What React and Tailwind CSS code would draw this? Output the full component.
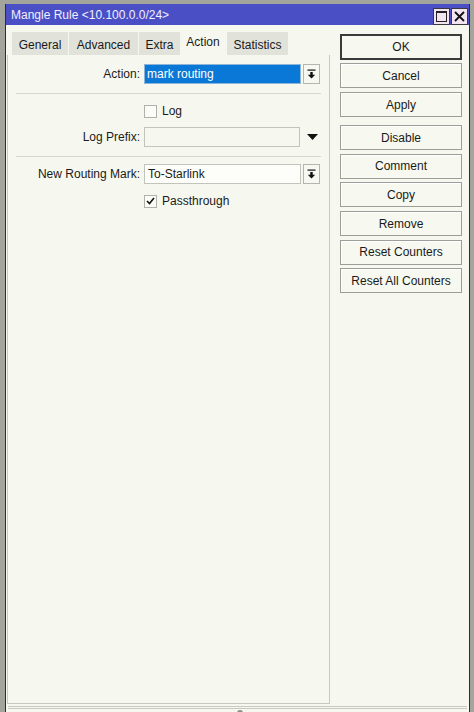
import React from "react";

function DropBtn() {
  return (
    <div className="w-[17px] h-[20px] border border-[#b4b6ae] bg-[#f7f8f2] flex items-center justify-center">
      <svg width="9" height="10" viewBox="0 0 9 10">
        <rect x="0.5" y="0.5" width="8" height="1.2" fill="#111" />
        <rect x="3.3" y="3" width="2.4" height="3" fill="#111" />
        <polygon points="0.8,5.8 8.2,5.8 4.5,9.6" fill="#111" />
      </svg>
    </div>
  );
}

function Btn({ children, primary }) {
  return (
    <div
      className={
        "flex items-center justify-center text-[12px] text-[#1a1a1a] bg-[#f7f9f0] " +
        (primary ? "h-[26px] border-2 border-[#3a3a3a]" : "h-[25px] border border-[#9c9e98] shadow-[inset_1px_1px_0_#ffffff]")
      }
    >
      {children}
    </div>
  );
}

export default function App() {
  return (
    <div
      className="w-[474px] h-[712px] bg-[#a3a59d] pt-[4px] pl-[5px] pr-[4px] overflow-hidden"
      style={{ fontFamily: '"Liberation Sans", Arial, sans-serif' }}
    >
      <div className="h-full border-l border-r border-[#2e2e2e] bg-[#f6f8ef] flex flex-col">
        {/* title bar */}
        <div className="h-[21px] bg-[#4a4fc6] flex items-center pl-[5px] pr-[1px]">
          <div className="flex-1 text-[12px] text-[#f0f0ff] leading-none">Mangle Rule &lt;10.100.0.0/24&gt;</div>
          <div className="flex gap-[1px] self-end">
            <div className="w-[17px] h-[17px] bg-[#f2e4f0] border border-[#3a3a3a] flex items-center justify-center">
              <div className="w-[11px] h-[11px] border border-[#222] border-t-2"></div>
            </div>
            <div className="w-[17px] h-[17px] bg-[#f2e4f0] border border-[#3a3a3a] flex items-center justify-center">
              <svg width="11" height="11" viewBox="0 0 11 11">
                <path d="M1 1 L10 10 M10 1 L1 10" stroke="#111" strokeWidth="1.8" />
              </svg>
            </div>
          </div>
        </div>

        {/* body */}
        <div className="flex flex-1">
          {/* left */}
          <div className="w-[324px] flex flex-col pl-[1px]">
            {/* tabs */}
            <div className="flex items-end h-[30px] pl-[5px] pt-[7px] text-[12px] text-[#1a1a1a]">
              <div className="h-[23px] w-[56px] bg-[#e1e3da] flex items-center justify-center pt-[2px]">General</div>
              <div className="h-[23px] w-[69px] ml-[1px] bg-[#e1e3da] flex items-center justify-center pt-[2px]">Advanced</div>
              <div className="h-[23px] w-[41px] ml-[1px] bg-[#e1e3da] flex items-center justify-center pt-[2px]">Extra</div>
              <div className="h-[23px] w-[46px] flex items-center justify-center pb-[3px]">Action</div>
              <div className="h-[23px] w-[61px] ml-[1px] bg-[#e1e3da] flex items-center justify-center pt-[2px]">Statistics</div>
            </div>
            {/* panel */}
            <div className="flex-1 border-r border-b border-l border-[#c8cac2] pt-[9px] text-[12px] text-[#1a1a1a]">
              {/* Action */}
              <div className="flex items-center h-[20px]">
                <div className="w-[136px] text-right pr-[4px]">Action:</div>
                <div className="w-[157px] h-[20px] bg-[#0a78d7] border border-[#8eb4d8] text-white pl-[2px] flex items-center">mark routing</div>
                <div className="ml-[2px]"><DropBtn /></div>
              </div>
              <div className="ml-[8px] mr-[8px] mt-[9px] h-0 border-t border-[#d6d8d0]"></div>
              {/* Log */}
              <div className="flex items-center h-[14px] mt-[10px]">
                <div className="w-[136px]"></div>
                <div className="w-[13px] h-[13px] border border-[#b0b2aa] bg-[#fbfcf7]"></div>
                <div className="ml-[5px]">Log</div>
              </div>
              {/* Log Prefix */}
              <div className="flex items-center h-[20px] mt-[9px]">
                <div className="w-[136px] text-right pr-[4px]">Log Prefix:</div>
                <div className="w-[156px] h-[20px] bg-[#f6f8ef] border border-[#c2c4bc]"></div>
                <div className="ml-[7px]">
                  <svg width="11" height="6" viewBox="0 0 11 6"><polygon points="0,0 11,0 5.5,6" fill="#111" /></svg>
                </div>
              </div>
              <div className="ml-[8px] mr-[8px] mt-[9px] h-0 border-t border-[#d6d8d0]"></div>
              {/* New Routing Mark */}
              <div className="flex items-center h-[20px] mt-[7px]">
                <div className="w-[136px] text-right pr-[4px] whitespace-nowrap">New Routing Mark:</div>
                <div className="w-[157px] h-[20px] bg-[#fdfef9] border border-[#c2c4bc] pl-[3px] flex items-center">To-Starlink</div>
                <div className="ml-[2px]"><DropBtn /></div>
              </div>
              {/* Passthrough */}
              <div className="flex items-center h-[14px] mt-[10px]">
                <div className="w-[136px]"></div>
                <div className="w-[13px] h-[13px] border border-[#b0b2aa] bg-[#fbfcf7] flex items-center justify-center">
                  <svg width="9" height="8" viewBox="0 0 9 8"><path d="M1 4 L3.5 6.5 L8 1" stroke="#111" strokeWidth="1.6" fill="none" /></svg>
                </div>
                <div className="ml-[5px]">Passthrough</div>
              </div>
            </div>
          </div>

          {/* right buttons */}
          <div className="w-[122px] ml-[10px] pt-[9px] flex flex-col">
            <Btn primary>OK</Btn>
            <div className="mt-[3px] flex flex-col gap-[4px]">
              <Btn>Cancel</Btn>
              <Btn>Apply</Btn>
            </div>
            <div className="mt-[8px] flex flex-col gap-[3.7px]">
              <Btn>Disable</Btn>
              <Btn>Comment</Btn>
              <Btn>Copy</Btn>
              <Btn>Remove</Btn>
              <Btn>Reset Counters</Btn>
              <Btn>Reset All Counters</Btn>
            </div>
          </div>
        </div>

        {/* bottom strip */}
        <div className="h-[8px] pt-[2px] px-[2px] flex flex-col">
          <div className="h-[3px] border-t border-b border-[#c8cac2] relative">
            <div className="absolute left-[229px] top-[3px] w-[6px] h-[4px] rounded-t-full bg-[#8a8c86]"></div>
          </div>
        </div>
      </div>
    </div>
  );
}
